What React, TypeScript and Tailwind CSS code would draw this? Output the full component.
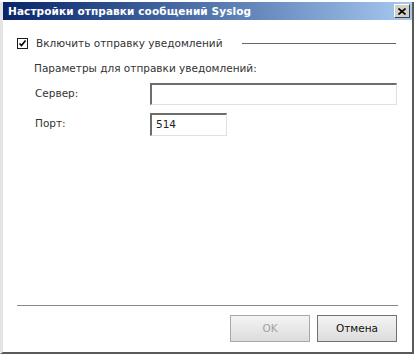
import React from 'react';

const font = { fontFamily: '"DejaVu Sans", Verdana, sans-serif' };

const App: React.FC = () => {
  return (
    <div className="w-[417px] h-[358px] bg-white overflow-hidden" style={font}>
      <div className="mt-[2px] w-[414px] h-[352px] flex flex-col border-l-[3px] border-l-[#e4e4e4] border-r-[2px] border-r-[#5a5a5a] border-b-[2px] border-b-[#5a5a5a]">
        {/* title bar */}
        <div className="h-[18px] flex items-center justify-between pl-[5px] pr-[2px] bg-gradient-to-r from-[#0a246a] to-[#a6caf0]">
          <span className="text-white font-bold text-[10.5px] leading-none tracking-[0.1px]">Настройки отправки сообщений Syslog</span>
          <div className="w-[16px] h-[14px] bg-[#d4d0c8] border border-t-white border-l-white border-r-[#404040] border-b-[#404040] flex items-center justify-center">
            <svg width="8" height="7" viewBox="0 0 8 7">
              <path d="M0.5 0.5 L7.5 6.5 M7.5 0.5 L0.5 6.5" stroke="#000" strokeWidth="1.6" />
            </svg>
          </div>
        </div>

        {/* body */}
        <div className="flex-1 flex flex-col bg-white text-[10.5px] text-[#333]">
          <div className="flex items-center mt-[16px] pl-[14px] pr-[16px]">
            <div className="w-[11px] h-[11px] border border-[#1c1c1c] flex items-center justify-center bg-white">
              <svg width="9" height="9" viewBox="0 0 9 9">
                <path d="M1.5 4.5 L3.5 6.5 L7.5 1.5" stroke="#000" strokeWidth="1.6" fill="none" />
              </svg>
            </div>
            <span className="ml-[8px]">Включить отправку уведомлений</span>
            <div className="flex-1 ml-[19px] h-px bg-[#666]" />
          </div>

          <div className="mt-[9px] pl-[31px]">Параметры для отправки уведомлений:</div>

          <div className="flex items-center mt-[6px] pl-[32px]">
            <span className="w-[115px]">Сервер:</span>
            <div className="w-[247px] h-[22px] border border-t-[#6d6d6d] border-l-[#6d6d6d] border-r-[#e0e0e0] border-b-[#e0e0e0] border-t-2 border-l-2 bg-white" />
          </div>

          <div className="flex items-center mt-[8px] pl-[32px]">
            <span className="w-[115px]">Порт:</span>
            <div className="w-[77px] h-[23px] border border-t-[#6d6d6d] border-l-[#6d6d6d] border-r-[#e0e0e0] border-b-[#e0e0e0] border-t-2 border-l-2 bg-white flex items-center pl-[4px] text-[#222]">514</div>
          </div>

          <div className="flex-1" />

          <div className="mx-[14px] h-px bg-[#888]" />
          <div className="flex justify-end gap-[7px] pr-[15px] mt-[9px] mb-[10px]">
            <div className="w-[80px] h-[27px] flex items-center justify-center border border-[#a8a8a8] bg-gradient-to-b from-[#f4f4f4] to-[#dcdcdc] text-[#a0a0a0]">OK</div>
            <div className="w-[80px] h-[27px] flex items-center justify-center border border-[#707070] bg-gradient-to-b from-[#f4f4f4] to-[#dcdcdc] text-[#111]">Отмена</div>
          </div>
        </div>
      </div>
    </div>
  );
};

export default App;
